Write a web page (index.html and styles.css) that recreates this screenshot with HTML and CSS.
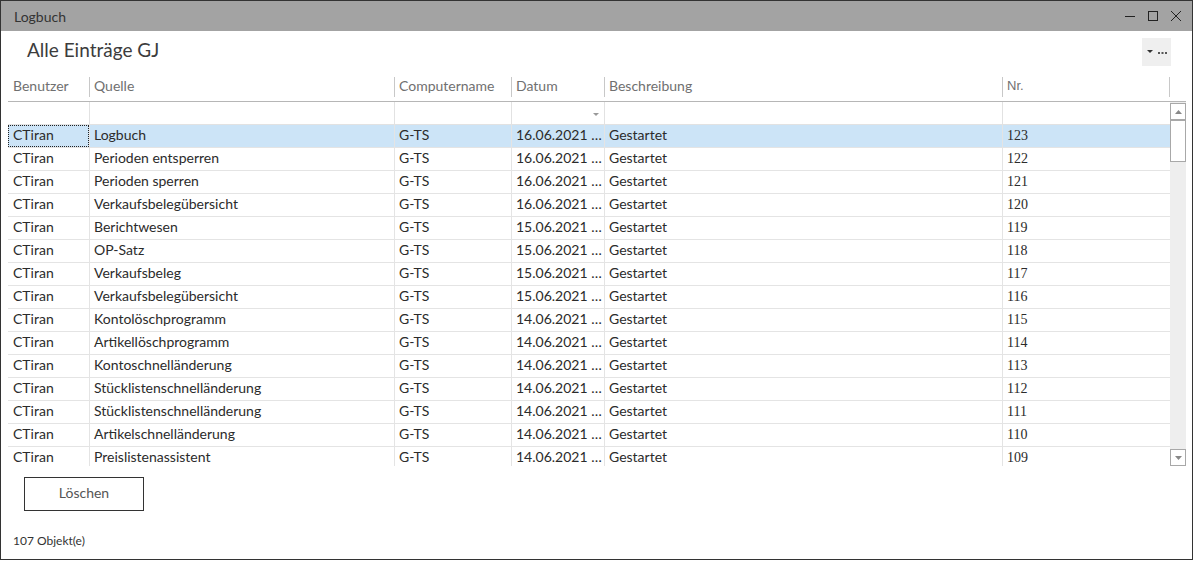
FILE: index.html
```html
<!DOCTYPE html>
<html lang="de">
<head>
<meta charset="utf-8">
<title>Logbuch</title>
<link rel="stylesheet" href="styles.css">
</head>
<body>
<div class="window">
  <div class="titlebar">
    <span class="title">Logbuch</span>
    <div class="controls">
      <svg width="12" height="12" viewBox="0 0 12 12"><path d="M1 6.5h10" stroke="#222" stroke-width="1"/></svg>
      <svg width="12" height="12" viewBox="0 0 12 12"><rect x="1.5" y="1.5" width="9" height="9" fill="none" stroke="#222" stroke-width="1"/></svg>
      <svg width="12" height="12" viewBox="0 0 12 12"><path d="M1 1L11 11M11 1L1 11" stroke="#222" stroke-width="1"/></svg>
    </div>
  </div>
  <div class="content">
    <div class="head">
      <h1 class="heading">Alle Einträge GJ</h1>
      <div class="menu-btn">
        <svg width="6" height="4" viewBox="0 0 6 4"><path d="M0 0h6L3 3z" fill="#333"/></svg>
        <svg width="9" height="3" viewBox="0 0 9 3"><rect x="0" y="1" width="2" height="2" fill="#555"/><rect x="3.5" y="1" width="2" height="2" fill="#555"/><rect x="7" y="1" width="2" height="2" fill="#555"/></svg>
      </div>
    </div>
    <div class="grid">
      <div class="grid-main">
        <div class="row hdr">
          <div class="c c1">Benutzer</div>
          <div class="c c2">Quelle</div>
          <div class="c c3">Computername</div>
          <div class="c c4">Datum</div>
          <div class="c c5">Beschreibung</div>
          <div class="c c6 num-h">Nr.</div>
        </div>
        <div class="row filter">
          <div class="c c1"></div>
          <div class="c c2"></div>
          <div class="c c3"></div>
          <div class="c c4"><svg class="fdrop" width="6" height="4" viewBox="0 0 6 4"><path d="M0 0h6L3 3z" fill="#999"/></svg></div>
          <div class="c c5"></div>
          <div class="c c6"></div>
        </div>
        <div class="rows">
          <div class="row data sel"><div class="c c1 focus">CTiran</div><div class="c c2">Logbuch</div><div class="c c3">G-TS</div><div class="c c4">16.06.2021 …</div><div class="c c5">Gestartet</div><div class="c c6 num">123</div></div>
          <div class="row data"><div class="c c1">CTiran</div><div class="c c2">Perioden entsperren</div><div class="c c3">G-TS</div><div class="c c4">16.06.2021 …</div><div class="c c5">Gestartet</div><div class="c c6 num">122</div></div>
          <div class="row data"><div class="c c1">CTiran</div><div class="c c2">Perioden sperren</div><div class="c c3">G-TS</div><div class="c c4">16.06.2021 …</div><div class="c c5">Gestartet</div><div class="c c6 num">121</div></div>
          <div class="row data"><div class="c c1">CTiran</div><div class="c c2">Verkaufsbelegübersicht</div><div class="c c3">G-TS</div><div class="c c4">16.06.2021 …</div><div class="c c5">Gestartet</div><div class="c c6 num">120</div></div>
          <div class="row data"><div class="c c1">CTiran</div><div class="c c2">Berichtwesen</div><div class="c c3">G-TS</div><div class="c c4">15.06.2021 …</div><div class="c c5">Gestartet</div><div class="c c6 num">119</div></div>
          <div class="row data"><div class="c c1">CTiran</div><div class="c c2">OP-Satz</div><div class="c c3">G-TS</div><div class="c c4">15.06.2021 …</div><div class="c c5">Gestartet</div><div class="c c6 num">118</div></div>
          <div class="row data"><div class="c c1">CTiran</div><div class="c c2">Verkaufsbeleg</div><div class="c c3">G-TS</div><div class="c c4">15.06.2021 …</div><div class="c c5">Gestartet</div><div class="c c6 num">117</div></div>
          <div class="row data"><div class="c c1">CTiran</div><div class="c c2">Verkaufsbelegübersicht</div><div class="c c3">G-TS</div><div class="c c4">15.06.2021 …</div><div class="c c5">Gestartet</div><div class="c c6 num">116</div></div>
          <div class="row data"><div class="c c1">CTiran</div><div class="c c2">Kontolöschprogramm</div><div class="c c3">G-TS</div><div class="c c4">14.06.2021 …</div><div class="c c5">Gestartet</div><div class="c c6 num">115</div></div>
          <div class="row data"><div class="c c1">CTiran</div><div class="c c2">Artikellöschprogramm</div><div class="c c3">G-TS</div><div class="c c4">14.06.2021 …</div><div class="c c5">Gestartet</div><div class="c c6 num">114</div></div>
          <div class="row data"><div class="c c1">CTiran</div><div class="c c2">Kontoschnelländerung</div><div class="c c3">G-TS</div><div class="c c4">14.06.2021 …</div><div class="c c5">Gestartet</div><div class="c c6 num">113</div></div>
          <div class="row data"><div class="c c1">CTiran</div><div class="c c2">Stücklistenschnelländerung</div><div class="c c3">G-TS</div><div class="c c4">14.06.2021 …</div><div class="c c5">Gestartet</div><div class="c c6 num">112</div></div>
          <div class="row data"><div class="c c1">CTiran</div><div class="c c2">Stücklistenschnelländerung</div><div class="c c3">G-TS</div><div class="c c4">14.06.2021 …</div><div class="c c5">Gestartet</div><div class="c c6 num">111</div></div>
          <div class="row data"><div class="c c1">CTiran</div><div class="c c2">Artikelschnelländerung</div><div class="c c3">G-TS</div><div class="c c4">14.06.2021 …</div><div class="c c5">Gestartet</div><div class="c c6 num">110</div></div>
          <div class="row data"><div class="c c1">CTiran</div><div class="c c2">Preislistenassistent</div><div class="c c3">G-TS</div><div class="c c4">14.06.2021 …</div><div class="c c5">Gestartet</div><div class="c c6 num">109</div></div>
        </div>
      </div>
      <div class="scroll-col">
        <div class="scroll-top"></div>
        <div class="scrollbar">
          <div class="sb-btn"><svg width="7" height="4" viewBox="0 0 7 4"><path d="M0 4h7L3.5 0z" fill="#888"/></svg></div>
          <div class="sb-thumb"></div>
          <div class="sb-track"></div>
          <div class="sb-btn"><svg width="7" height="4" viewBox="0 0 7 4"><path d="M0 0h7L3.5 4z" fill="#888"/></svg></div>
        </div>
      </div>
    </div>
    <button class="btn">Löschen</button>
    <div class="status">107 Objekt(e)</div>
  </div>
</div>
</body>
</html>
```
FILE: styles.css
```css
* { box-sizing: border-box; }
html, body { margin: 0; padding: 0; background: #fff; }
body {
  width: 1195px;
  height: 562px;
  font-family: "Lato", "Noto Sans", sans-serif;
  color: #2b2b2b;
}
.window {
  width: 1193px;
  height: 560px;
  border: 1px solid #333;
  display: flex;
  flex-direction: column;
  overflow: hidden;
}
.titlebar {
  height: 30px;
  background: #a3a3a3;
  display: flex;
  align-items: center;
  justify-content: space-between;
  padding: 0 10px 0 13px;
  flex: none;
}
.title { font-size: 14px; color: #333; }
.controls { display: flex; gap: 11px; align-items: center; }
.controls svg { display: block; }
.content {
  flex: 1;
  display: flex;
  flex-direction: column;
  padding: 6px 4px 0 7px;
  min-height: 0;
}
.head {
  display: flex;
  justify-content: space-between;
  align-items: flex-start;
  height: 38px;
  padding-right: 17px;
}
.heading {
  margin: 1px 0 0 19px;
  font-size: 19px;
  font-weight: normal;
  color: #3c3c3c;
}
.menu-btn {
  width: 29px;
  height: 28px;
  margin-top: 1px;
  background: #efefef;
  display: flex;
  align-items: center;
  justify-content: center;
  gap: 5px;
}
.menu-btn svg { display: block; }
.grid {
  display: flex;
  height: 391px;
  width: 1178px;
  flex: none;
}
.grid-main {
  width: 1162px;
  display: flex;
  flex-direction: column;
  overflow: hidden;
}
.row { display: flex; flex: none; }
.c {
  flex: none;
  white-space: nowrap;
  overflow: hidden;
  font-size: 14px;
  padding-left: 4px;
}
.c1 { width: 81px; }
.c2 { width: 305px; }
.c3 { width: 117px; }
.c4 { width: 93px; }
.c5 { width: 398px; }
.c6 { width: 168px; }
.hdr {
  height: 27px;
  border-bottom: 1px solid #b6b6b6;
  color: #707070;
  align-items: center;
}
.hdr .c {
  padding-top: 0;
  border-left: 1px solid #c8c8c8;
  height: 20px;
  line-height: 18px;
  margin-bottom: 3px;
}
.hdr .c1 { border-left-color: transparent; }
.hdr .c6 { border-right: 1px solid #c8c8c8; }
.num-h { font-family: "Liberation Sans Narrow", "Liberation Sans", sans-serif; font-size: 13px; }
.filter { height: 23px; border-bottom: 1px solid #e2e2e2; }
.filter .c { border-left: 1px solid #e2e2e2; height: 22px; position: relative; }
.filter .c1 { border-left-color: transparent; }
.fdrop { position: absolute; right: 5px; top: 11px; }
.rows { display: flex; flex-direction: column; }
.data { height: 23px; border-bottom: 1px solid #e4e4e4; }
.data .c { border-left: 1px solid #e4e4e4; line-height: 20px; height: 22px; }
.data .c1 { border-left-color: transparent; }
.sel { background: #cce4f7; }
.focus { outline: 1px dotted #222; outline-offset: -1px; }
.data .num { font-family: "Liberation Serif", serif; font-size: 14px; padding-top: 1px; }
.scroll-col { width: 16px; display: flex; flex-direction: column; }
.scroll-top { height: 27px; border-bottom: 1px solid #b6b6b6; }
.scrollbar {
  flex: 1;
  background: #eeeeee;
  display: flex;
  flex-direction: column;
  padding: 1px 0 0 0;
}
.sb-btn {
  height: 17px;
  width: 16px;
  border: 1px solid #a8a8a8;
  background: #fff;
  display: flex;
  align-items: center;
  justify-content: center;
}
.sb-btn svg { display: block; }
.sb-thumb {
  height: 42px;
  width: 16px;
  border: 1px solid #a8a8a8;
  background: #fff;
}
.sb-track { flex: 1; }
.btn {
  margin: 11px 0 0 16px;
  width: 120px;
  height: 34px;
  border: 1px solid #333;
  background: #fff;
  font-family: inherit;
  font-size: 14px;
  color: #555;
  padding: 0 0 4px 0;
  flex: none;
}
.status {
  margin: 22px 0 0 5px;
  font-size: 12px;
  color: #333;
}
```
